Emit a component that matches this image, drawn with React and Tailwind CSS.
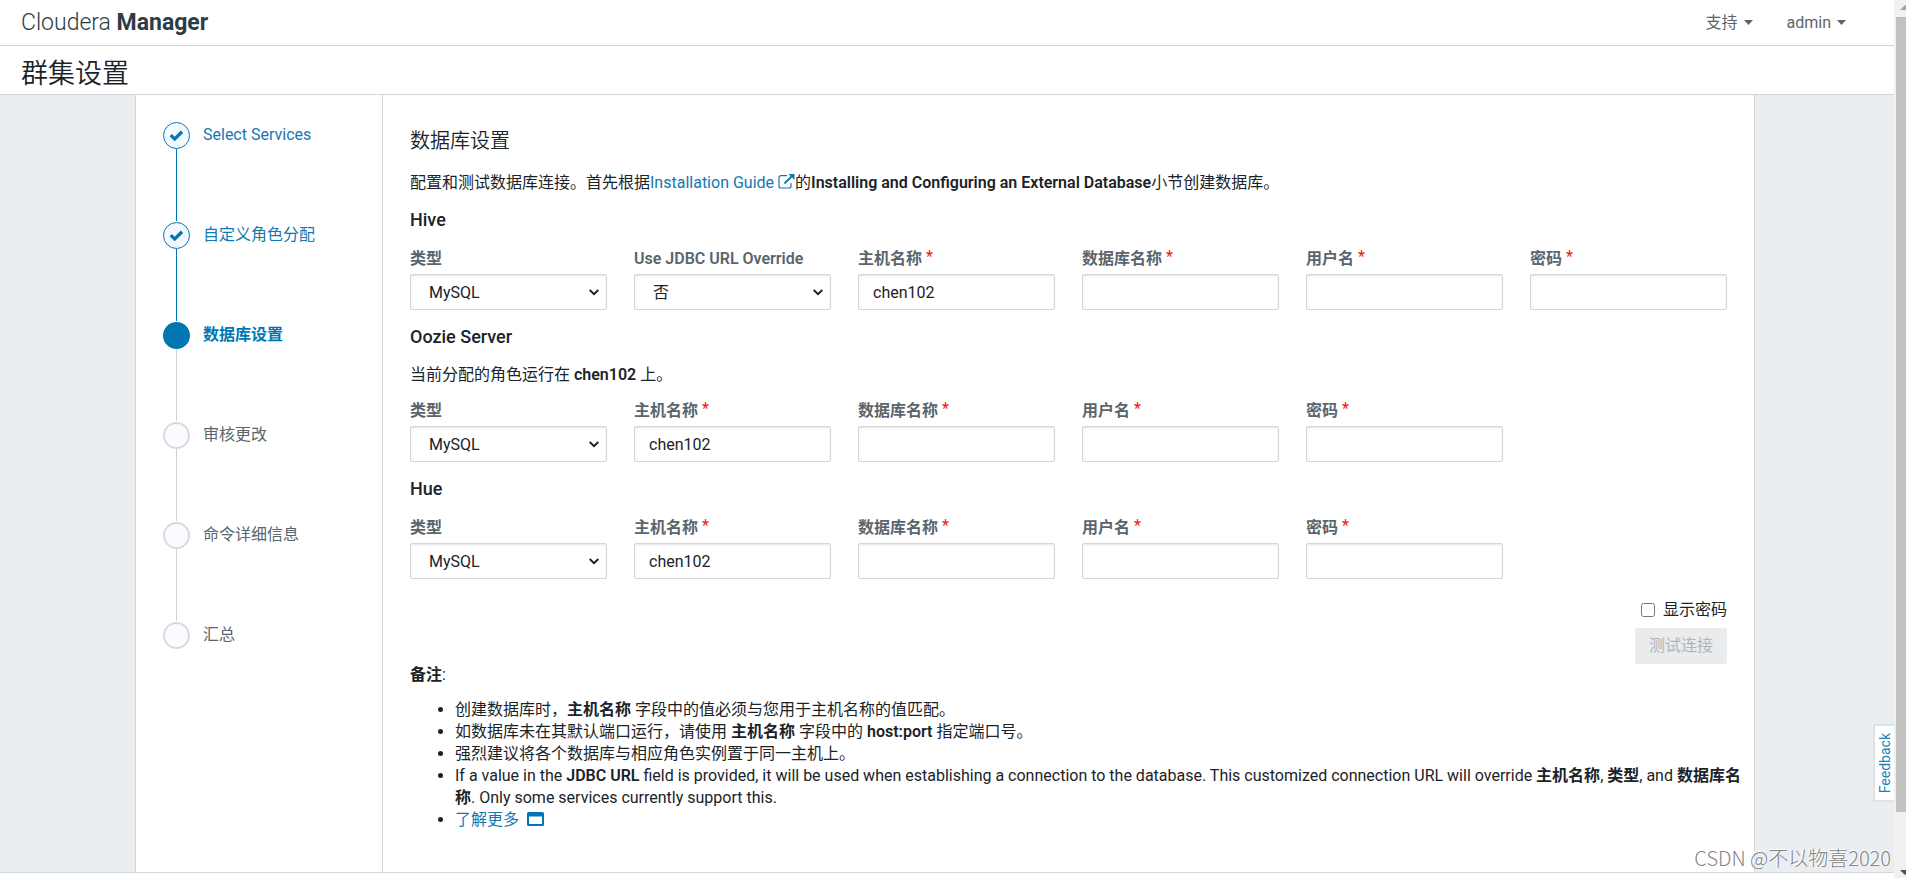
import React from "react";

const steps = [
  { name: "Select Services", state: "done" },
  { name: "自定义角色分配", state: "done" },
  { name: "数据库设置", state: "current" },
  { name: "审核更改", state: "todo" },
  { name: "命令详细信息", state: "todo" },
  { name: "汇总", state: "todo" },
];

const circleStyles = {
  done: "border border-[#0077b3] bg-[#f4f9fe]",
  current: "bg-[#0077b3]",
  todo: "border-2 border-[#d8dadc] bg-[#f9fbfe]",
};

const nameStyles = {
  done: "text-[#1378b0]",
  current: "font-semibold text-[#0077b3]",
  todo: "text-[#5a656d]",
};

function Caret() {
  return (
    <svg width="9" height="5" viewBox="0 0 9 5" aria-hidden="true">
      <path d="M0 0h9L4.5 5z" fill="currentColor" />
    </svg>
  );
}

function Step({ name, state, last }) {
  return (
    <li className="flex gap-[13px]">
      <div className="flex flex-col items-center">
        <span className={"flex size-[27px] items-center justify-center rounded-full " + circleStyles[state]}>
          {state === "done" && (
            <svg width="15" height="12" viewBox="0 0 15 12" aria-hidden="true">
              <path d="M0.6 6.2L2.9 3.9L5.7 6.7L11.9 0.6L14.2 2.9L5.7 11.3z" fill="#0077b3" />
            </svg>
          )}
        </span>
        {!last && (
          <span className={"mb-px h-[72px] w-px " + (state === "done" ? "bg-[#0077b3]" : "bg-[#d0d3d6]")} />
        )}
      </div>
      <a href="#step" className={"h-[26px] text-base leading-[26px] " + nameStyles[state]}>
        {name}
      </a>
    </li>
  );
}

const controlStyle =
  "h-9 w-full rounded-xs border border-[#d3d5d8] bg-white text-base text-[#1b2329] shadow-[inset_0_1px_2px_rgba(0,0,0,0.1)]";

function Field({ id, label, required, options, value = "", password }) {
  return (
    <div className="flex min-w-0 flex-col gap-1">
      <label
        htmlFor={id}
        className="flex h-[23px] gap-1 text-base leading-6 font-semibold whitespace-nowrap text-[#5a656d]"
      >
        {label}
        {required && <span className="leading-5 font-normal text-[#e02020]">*</span>}
      </label>
      {options ? (
        <div className="relative">
          <select id={id} className={controlStyle + " appearance-none pt-px pr-7 pl-[18px]"}>
            {options.map((o) => (
              <option key={o}>{o}</option>
            ))}
          </select>
          <svg
            width="10"
            height="7"
            viewBox="0 0 10 7"
            fill="none"
            className="pointer-events-none absolute top-[15px] right-2"
            aria-hidden="true"
          >
            <path d="M0.7 1L5 5.200L9.300 1" stroke="#1b2329" strokeWidth="2" />
          </svg>
        </div>
      ) : (
        <input id={id} type={password ? "password" : "text"} defaultValue={value} className={controlStyle + " px-[14px]"} />
      )}
    </div>
  );
}

function Service({ id, title, note, override }) {
  return (
    <section>
      <h3 className="my-[15px] text-lg leading-6 font-medium">{title}</h3>
      {note && <p className="mb-[13px] text-base leading-[22px]">{note}</p>}
      <div className="grid grid-cols-6 gap-x-[27px]">
        <Field id={id + "-type"} label="类型" options={["MySQL", "PostgreSQL", "Oracle"]} />
        {override && <Field id={id + "-override"} label="Use JDBC URL Override" options={["否", "是"]} />}
        <Field id={id + "-host"} label="主机名称" required value="chen102" />
        <Field id={id + "-db"} label="数据库名称" required />
        <Field id={id + "-user"} label="用户名" required />
        <Field id={id + "-pass"} label="密码" required password />
      </div>
    </section>
  );
}

function B({ children }) {
  return <strong className="font-semibold">{children}</strong>;
}

export default function App() {
  return (
    <div className="flex min-h-screen bg-white font-[Roboto,'Noto_Sans_CJK_SC',sans-serif] text-[#1b2329]">
      <div className="relative flex min-w-0 flex-1 flex-col pb-[5px]">
        <header className="flex h-[46px] items-center justify-between border-b border-[#d3d5db] pr-12 pl-[21px]">
          <a href="#home" className="text-[23px] leading-7 font-light text-[#2d3b45]">
            Cloudera <b className="font-bold">Manager</b>
          </a>
          <nav className="flex gap-[34px] text-base text-[#5a656d]">
            <button className="flex items-center gap-1.5">
              支持 <Caret />
            </button>
            <button className="flex items-center gap-1.5">
              admin <Caret />
            </button>
          </nav>
        </header>
        <div className="flex h-[49px] items-center border-b border-[#d3d5db] pt-2 pl-[21px]">
          <h1 className="text-[27px] leading-9 font-[350]">群集设置</h1>
        </div>

        <div className="flex flex-1 justify-center border-b border-[#d3d5db] bg-[#eaeef1] pr-1">
          <div className="flex w-full max-w-[1620px] border-x border-[#d3d5db] bg-white">
            <aside className="w-[247px] shrink-0 border-r border-[#d3d5db] pt-[27px] pl-[27px]">
              <ol>
                {steps.map((s, i) => (
                  <Step key={s.name} {...s} last={i === steps.length - 1} />
                ))}
              </ol>
            </aside>

            <main className="min-w-0 flex-1 px-[27px] pt-8">
              <h2 className="text-xl leading-7 font-[350]">数据库设置</h2>
              <p className="mt-[18px] text-base leading-5">
                配置和测试数据库连接。首先根据
                <a href="#guide" className="text-[#1378b0]">
                  Installation Guide{" "}
                  <svg width="17" height="15" viewBox="0 0 17 15" fill="none" className="inline align-[-1px]" aria-hidden="true">
                    <path d="M9 1.700H3a2 2 0 0 0-2 2v8.300a2 2 0 0 0 2 2h8a2 2 0 0 0 2-2V9" stroke="currentColor" strokeWidth="1.2" />
                    <path d="M6.5 9.5L14 2" stroke="currentColor" strokeWidth="2" />
                    <path d="M10.5 0H16.500V6z" fill="currentColor" />
                  </svg>
                </a>
                的<B>Installing and Configuring an External Database</B>小节创建数据库。
              </p>

              <Service id="hive" title="Hive" override />
              <Service
                id="oozie"
                title="Oozie Server"
                note={
                  <>
                    当前分配的角色运行在 <B>chen102</B> 上。
                  </>
                }
              />
              <Service id="hue" title="Hue" />

              <div className="mt-5 flex flex-col items-end gap-[7px]">
                <label className="flex items-center gap-2 text-base leading-[22px]">
                  <input type="checkbox" className="size-[14px]" />
                  显示密码
                </label>
                <button disabled className="h-9 rounded-xs bg-[#e9ebec] px-[14px] text-base text-[#b0b5b9]">
                  测试连接
                </button>
              </div>

              <p className="text-base leading-[22px]">
                <B>备注</B>:
              </p>
              <ul className="mt-[13px] -mr-4 mb-9 list-disc pl-[45px] text-base leading-[22px]">
                <li>
                  创建数据库时，<B>主机名称</B> 字段中的值必须与您用于主机名称的值匹配。
                </li>
                <li>
                  如数据库未在其默认端口运行，请使用 <B>主机名称</B> 字段中的 <B>host:port</B> 指定端口号。
                </li>
                <li>强烈建议将各个数据库与相应角色实例置于同一主机上。</li>
                <li>
                  If a value in the <B>JDBC URL</B> field is provided, it will be used when establishing a connection to
                  the database. This customized connection URL will override <B>主机名称</B>, <B>类型</B>, and{" "}
                  <B>数据库名称</B>. Only some services currently support this.
                </li>
                <li>
                  <a href="#more" className="text-[#1378b0]">
                    了解更多{" "}
                    <svg width="17" height="14" viewBox="0 0 17 14" className="ml-1 inline align-[-1px]" aria-hidden="true">
                      <path
                        d="M1.500 0h14A1.500 1.500 0 0 1 17 1.500v11a1.500 1.500 0 0 1-1.500 1.500h-14A1.500 1.500 0 0 1 0 12.500v-11A1.500 1.500 0 0 1 1.500 0zM2 4.500V12h13V4.500z"
                        fill="#0077b3"
                        fillRule="evenodd"
                      />
                    </svg>
                  </a>
                </li>
              </ul>
            </main>
          </div>
        </div>

        <button className="absolute right-0 bottom-[76px] flex h-[78px] w-[21px] items-center justify-center border-2 border-r-0 border-[#dfe3e6] bg-white">
          <span className="rotate-180 text-sm leading-4 text-[#1583bd] [writing-mode:vertical-rl]">Feedback</span>
        </button>
        <span className="absolute right-[3px] bottom-1 font-['Noto_Sans_CJK_SC',sans-serif] text-xl leading-8 font-light whitespace-nowrap text-[#858585] [text-shadow:-1px_-1px_0_#ffffff]">
          CSDN @不以物喜2020
        </span>
      </div>

      <div className="flex w-3 shrink-0 flex-col items-end bg-[#f1f1f1] pl-0.5" aria-hidden="true">
        <svg width="10" height="17" viewBox="0 0 10 17">
          <path d="M4 10L9 5l5 5z" fill="#a3a3a3" />
        </svg>
        <div className="mb-[46px] w-full flex-1 bg-[#c1c1c1]" />
        <svg width="10" height="20" viewBox="0 0 10 20">
          <path d="M4 12h10L9 17z" fill="#505050" />
        </svg>
      </div>
    </div>
  );
}
